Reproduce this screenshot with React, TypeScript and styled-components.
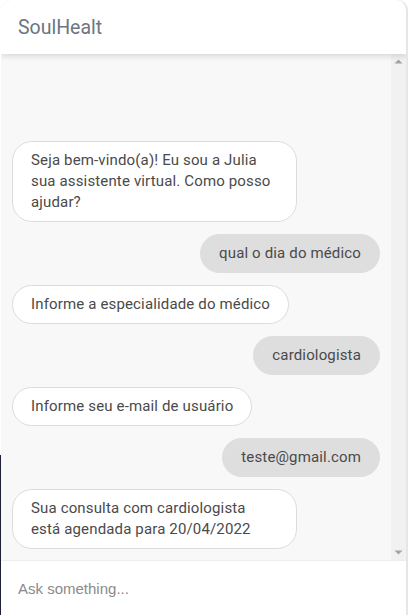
import React from "react";
import styled, { createGlobalStyle } from "styled-components";

const Global = createGlobalStyle`
  html, body { margin: 0; padding: 0; background: #ffffff; }
  body { font-family: Roboto, "Noto Sans", sans-serif; }
  * { box-sizing: border-box; }
`;

const Page = styled.div`
  display: flex;
  height: 615px;
  background-color: #ffffff;
  background-image: linear-gradient(#1c2233, #1c2233);
  background-repeat: no-repeat;
  background-size: 1px 160px;
  background-position: left bottom;
`;

const Widget = styled.div`
  margin-left: 1px;
  width: 407px;
  height: 615px;
  display: flex;
  flex-direction: column;
  background: #f8f8f8;
  border-radius: 10px 10px 0 0;
  border-right: 2px solid #e6e6e6;
  overflow: hidden;
`;

const Header = styled.div`
  flex: 0 0 54px;
  display: flex;
  align-items: center;
  padding: 0 17px;
  background: #ffffff;
  border-radius: 10px 10px 0 0;
  box-shadow: 0 2px 6px rgba(0, 0, 0, 0.14);
  position: relative;
  z-index: 1;
`;

const Title = styled.h2`
  margin: 0;
  font-family: Roboto, sans-serif;
  font-weight: 400;
  font-size: 19.5px;
  color: #6c7680;
`;

const Body = styled.div`
  flex: 1;
  display: flex;
  min-height: 0;
`;

const Messages = styled.div`
  flex: 1;
  overflow: hidden;
  display: flex;
  flex-direction: column;
  justify-content: flex-end;
  gap: 12px;
  padding: 12px 11px 11px 11px;
`;

const ScrollTrack = styled.div`
  flex: 0 0 15px;
  background: #f1f1f1;
  display: flex;
  flex-direction: column;
  justify-content: space-between;
`;

const ScrollButton = styled.div`
  width: 15px;
  height: 15px;
  display: flex;
  align-items: center;
  justify-content: center;
`;

const Arrow = ({ down }: { down?: boolean }) => (
  <svg width="15" height="15" viewBox="0 0 15 15">
    <polygon
      points={down ? "3.5,5.5 11.5,5.5 7.5,9.5" : "3.5,9.5 11.5,9.5 7.5,5.5"}
      fill="#a3a3a3"
    />
  </svg>
);

const Row = styled.div<{ $user?: boolean }>`
  display: flex;
  justify-content: ${(p) => (p.$user ? "flex-end" : "flex-start")};
`;

const Bubble = styled.div<{ $user?: boolean }>`
  max-width: 285px;
  padding: 8px 18px;
  border-radius: 20px;
  font-family: Roboto, sans-serif;
  font-size: 15px;
  letter-spacing: 0.15px;
  line-height: 21px;
  color: #4a4a4a;
  background: ${(p) => (p.$user ? "#dedede" : "#ffffff")};
  border: 1px solid ${(p) => (p.$user ? "#dedede" : "#dcdcdc")};
`;

const Footer = styled.div`
  flex: 0 0 55px;
  background: #ffffff;
  border-top: 1px solid #eeeeee;
  display: flex;
  align-items: center;
`;

const Input = styled.input`
  width: 100%;
  height: 100%;
  border: none;
  outline: none;
  padding: 0 17px;
  background: transparent;
  font-family: "Liberation Sans", Arial, sans-serif;
  font-size: 15px;
  color: #4a4a4a;
  &::placeholder { color: #8a8a8a; }
`;

const messages: { user?: boolean; text: string }[] = [
  { text: "Seja bem-vindo(a)! Eu sou a Julia sua assistente virtual. Como posso ajudar?" },
  { user: true, text: "qual o dia do médico" },
  { text: "Informe a especialidade do médico" },
  { user: true, text: "cardiologista" },
  { text: "Informe seu e-mail de usuário" },
  { user: true, text: "teste@gmail.com" },
  { text: "Sua consulta com cardiologista está agendada para 20/04/2022" },
];

export default function App() {
  return (
    <>
      <Global />
      <Page>
        <Widget>
          <Header>
            <Title>SoulHealt</Title>
          </Header>
          <Body>
            <Messages>
              {messages.map((m, i) => (
                <Row key={i} $user={m.user}>
                  <Bubble $user={m.user}>{m.text}</Bubble>
                </Row>
              ))}
            </Messages>
            <ScrollTrack>
              <ScrollButton>
                <Arrow />
              </ScrollButton>
              <ScrollButton>
                <Arrow down />
              </ScrollButton>
            </ScrollTrack>
          </Body>
          <Footer>
            <Input placeholder="Ask something..." />
          </Footer>
        </Widget>
      </Page>
    </>
  );
}
